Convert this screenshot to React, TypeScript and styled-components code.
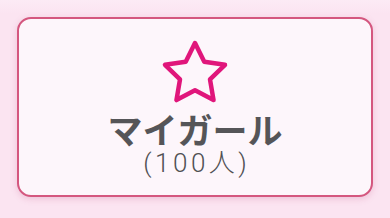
import React, { FC } from 'react'
import styled, { createGlobalStyle } from 'styled-components'

const GlobalStyle = createGlobalStyle`
  html, body {
    margin: 0;
    padding: 0;
    background: #fbe4f1;
  }
  body {
    font-family: 'Noto Sans CJK JP', 'Noto Sans', sans-serif;
  }
`

const Page = styled.div`
  width: 390px;
  height: 218px;
  box-sizing: border-box;
  padding: 17px 17px 21px;
  background: linear-gradient(180deg, #fcebf5 0px, #fbe4f1 14px, #fbe4f1 100%);
`

const Card = styled.button`
  width: 100%;
  height: 100%;
  box-sizing: border-box;
  border: 2px solid #d4577f;
  border-radius: 14px;
  background: #fdf6fb;
  box-shadow: 0 2px 6px rgba(200, 90, 140, 0.25);
  display: flex;
  flex-direction: column;
  align-items: center;
  padding: 18px 0 0;
  cursor: pointer;
  font-family: inherit;
`

const StarIcon = styled.svg`
  width: 72px;
  height: 72px;
  display: block;
  margin-bottom: -6px;
`

const Title = styled.div`
  font-size: 35px;
  font-weight: 700;
  line-height: 36px;
  margin-top: 8px;
  color: #555558;
`

const Count = styled.div`
  font-family: Roboto, 'Noto Sans CJK JP', sans-serif;
  font-size: 26px;
  font-weight: 300;
  line-height: 26px;
  margin-top: 3px;
  letter-spacing: 3.5px;
  padding-left: 3.5px;
  color: #505053;
`

type FavoriteProps = {
  label: string
  count: number
}

const FavoriteButton: FC<FavoriteProps> = ({ label, count }) => (
  <Card type='button'>
    <StarIcon viewBox='0 0 24 24' fill='none'>
      <polygon
        points='12 2 15.09 8.26 22 9.27 17 14.14 18.18 21.02 12 17.77 5.82 21.02 7 14.14 2 9.27 8.91 8.26 12 2'
        stroke='#e0167b'
        strokeWidth={1.5}
        strokeLinejoin='round'
      />
    </StarIcon>
    <Title>{label}</Title>
    <Count>({count}人)</Count>
  </Card>
)

const App: FC = () => (
  <Page>
    <GlobalStyle />
    <FavoriteButton label='マイガール' count={100} />
  </Page>
)

export default App
